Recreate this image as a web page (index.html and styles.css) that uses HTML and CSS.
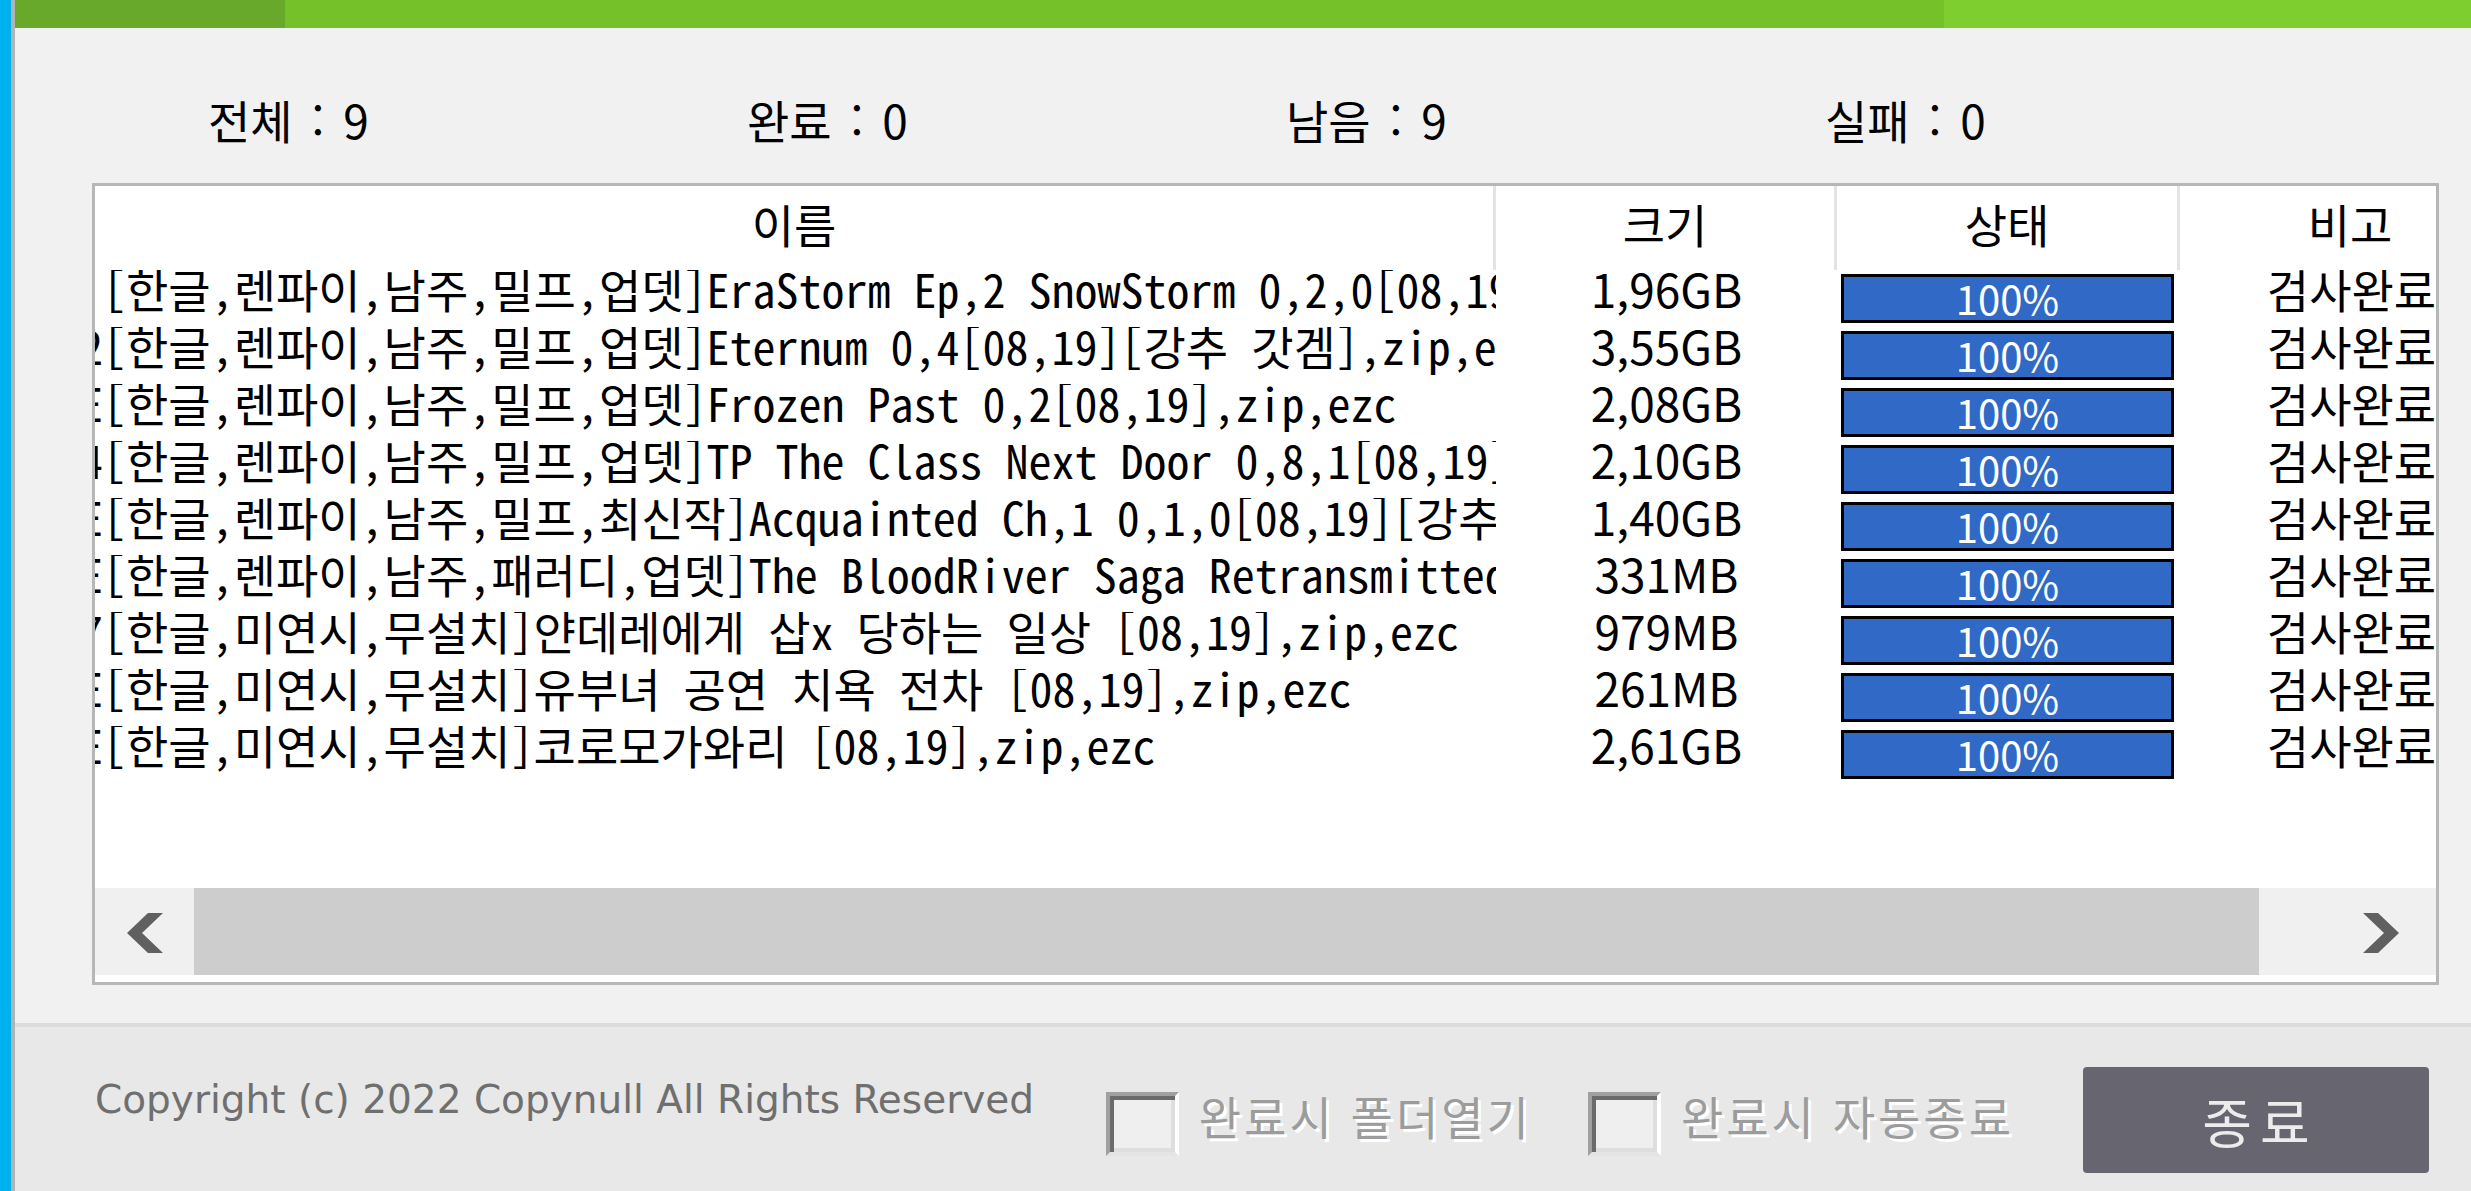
FILE: index.html
```html
<!DOCTYPE html>
<html lang="ko">
<head>
<meta charset="utf-8">
<title>검사</title>
<link rel="stylesheet" href="styles.css">
</head>
<body>
<div class="window">
  <div class="main">
    <div class="topbar">
      <div class="seg seg-a"></div>
      <div class="seg seg-b"></div>
      <div class="seg seg-c"></div>
    </div>

    <div class="stats">
      <div class="stat">전체 : 9</div>
      <div class="stat">완료 : 0</div>
      <div class="stat">남음 : 9</div>
      <div class="stat">실패 : 0</div>
    </div>

    <div class="list">
      <div class="cols head">
        <div class="hc">이름</div>
        <div class="hc">크기</div>
        <div class="hc">상태</div>
        <div class="hc">비고</div>
      </div>
      <div class="rows">
        <div class="cols row">
          <div class="name"><span class="name-in">&nbsp;[한글,렌파이,남주,밀프,업뎃]EraStorm Ep,2 SnowStorm 0,2,0[08,19],zip,ezc</span></div>
          <div class="size">1,96GB</div>
          <div class="status"><div class="bar">100%</div></div>
          <div class="note">검사완료</div>
        </div>
        <div class="cols row">
          <div class="name"><span class="name-in">2[한글,렌파이,남주,밀프,업뎃]Eternum 0,4[08,19][강추 갓겜],zip,ezc</span></div>
          <div class="size">3,55GB</div>
          <div class="status"><div class="bar">100%</div></div>
          <div class="note">검사완료</div>
        </div>
        <div class="cols row">
          <div class="name"><span class="name-in">E[한글,렌파이,남주,밀프,업뎃]Frozen Past 0,2[08,19],zip,ezc</span></div>
          <div class="size">2,08GB</div>
          <div class="status"><div class="bar">100%</div></div>
          <div class="note">검사완료</div>
        </div>
        <div class="cols row">
          <div class="name"><span class="name-in">4[한글,렌파이,남주,밀프,업뎃]TP The Class Next Door 0,8,1[08,19],zip,ezc</span></div>
          <div class="size">2,10GB</div>
          <div class="status"><div class="bar">100%</div></div>
          <div class="note">검사완료</div>
        </div>
        <div class="cols row">
          <div class="name"><span class="name-in">E[한글,렌파이,남주,밀프,최신작]Acquainted Ch,1 0,1,0[08,19][강추 갓겜],zip,ezc</span></div>
          <div class="size">1,40GB</div>
          <div class="status"><div class="bar">100%</div></div>
          <div class="note">검사완료</div>
        </div>
        <div class="cols row">
          <div class="name"><span class="name-in">E[한글,렌파이,남주,패러디,업뎃]The BloodRiver Saga Retransmitted[08,19],zip,ezc</span></div>
          <div class="size">331MB</div>
          <div class="status"><div class="bar">100%</div></div>
          <div class="note">검사완료</div>
        </div>
        <div class="cols row">
          <div class="name"><span class="name-in">7[한글,미연시,무설치]얀데레에게 삽x 당하는 일상 [08,19],zip,ezc</span></div>
          <div class="size">979MB</div>
          <div class="status"><div class="bar">100%</div></div>
          <div class="note">검사완료</div>
        </div>
        <div class="cols row">
          <div class="name"><span class="name-in">E[한글,미연시,무설치]유부녀 공연 치욕 전차 [08,19],zip,ezc</span></div>
          <div class="size">261MB</div>
          <div class="status"><div class="bar">100%</div></div>
          <div class="note">검사완료</div>
        </div>
        <div class="cols row">
          <div class="name"><span class="name-in">E[한글,미연시,무설치]코로모가와리 [08,19],zip,ezc</span></div>
          <div class="size">2,61GB</div>
          <div class="status"><div class="bar">100%</div></div>
          <div class="note">검사완료</div>
        </div>
      </div>
      <div class="scroll">
        <div class="sbtn">
          <svg class="arrow" viewBox="0 0 36 40" width="36" height="40"><polygon points="36,0 21,0 0,20 21,40 36,40 15,20"/></svg>
        </div>
        <div class="thumb"></div>
        <div class="track"></div>
        <div class="sbtn sbtn-r">
          <svg class="arrow" viewBox="0 0 36 40" width="36" height="40"><polygon points="0,0 15,0 36,20 15,40 0,40 21,20"/></svg>
        </div>
      </div>
    </div>

    <div class="footer">
      <div class="copy">Copyright (c) 2022 Copynull All Rights Reserved</div>
      <div class="opt">
        <div class="cb"></div>
        <div class="opt-label">완료시 폴더열기</div>
      </div>
      <div class="opt">
        <div class="cb"></div>
        <div class="opt-label">완료시 자동종료</div>
      </div>
      <div class="btn">종료</div>
    </div>
  </div>
</div>
</body>
</html>
```

FILE: styles.css
```css
* {
  box-sizing: border-box;
}

html,
body {
  margin: 0;
  padding: 0;
}

body {
  font-family: "Noto Sans CJK KR", "Noto Sans", sans-serif;
  background: #f1f1f1;
  color: #000;
  overflow: hidden;
}

.window {
  display: flex;
  height: 1191px;
  border-left: 11px solid #00b1f2;
}

.main {
  flex: 1;
  min-width: 0;
  display: flex;
  flex-direction: column;
  border-left: 4px solid #b3b3b3;
}

/* top progress strip */
.topbar {
  display: flex;
  height: 28px;
  flex-shrink: 0;
}

.seg-a {
  width: 270px;
  background: #68a82a;
}

.seg-b {
  width: 1659px;
  background: #74c12a;
}

.seg-c {
  flex: 1;
  background: #7fce2f;
}

/* counters */
.stats {
  display: flex;
  margin-top: 73px;
  padding-left: 193px;
  font-size: 46px;
  line-height: 36px;
  word-spacing: 6px;
  flex-shrink: 0;
}

.stat {
  width: 539px;
  white-space: nowrap;
}

/* list view */
.list {
  margin: 46px 32px 0 77px;
  height: 802px;
  flex-shrink: 0;
  border: 3px solid #b7b7b7;
  background: #fff;
  display: flex;
  flex-direction: column;
  overflow: hidden;
}

.cols {
  display: grid;
  grid-template-columns: 1401px 341px 343px 343px;
}

.head {
  height: 84px;
  flex-shrink: 0;
}

.hc {
  border-right: 3px solid #e4e4e4;
  text-align: center;
  font-size: 46px;
  line-height: 36px;
  padding-top: 19px;
}

.rows {
  flex: 1;
  overflow: hidden;
}

.row {
  height: 57px;
  font-size: 46px;
  line-height: 36px;
  white-space: nowrap;
}

.name {
  overflow: hidden;
  padding-right: 3px;
  font-family: "Noto Sans Mono CJK KR", "DejaVu Sans Mono", "Noto Sans CJK KR", monospace;
  font-size: 46px;
}

.name-in {
  display: block;
  margin-left: -15px;
}

.size,
.note {
  text-align: center;
}

.status {
  padding: 4px 6px 0 4px;
}

.bar {
  height: 49px;
  border: 3px solid #000;
  background: #3169c6;
  color: #fff;
  font-size: 40px;
  line-height: 43px;
  text-align: center;
}

/* horizontal scrollbar */
.scroll {
  height: 87px;
  flex-shrink: 0;
  display: flex;
  background: #f0f0f0;
  margin-bottom: 7px;
}

.sbtn {
  width: 99px;
  flex-shrink: 0;
  display: flex;
  align-items: center;
  justify-content: center;
}

.sbtn-r {
  padding-right: 12px;
}

.arrow {
  fill: #606060;
  margin-top: 3px;
}

.thumb {
  width: 2065px;
  flex-shrink: 0;
  background: #cdcdcd;
}

.track {
  flex: 1;
}

/* footer */
.footer {
  flex: 1;
  margin-top: 38px;
  border-top: 4px solid #dcdcdc;
  background: #e8e8e8;
  display: flex;
  align-items: flex-start;
  padding: 40px 42px 0 80px;
}

.copy {
  flex: 1;
  font-family: "DejaVu Sans", "Liberation Sans", sans-serif;
  font-size: 39px;
  line-height: 44px;
  color: #6f6f6f;
  margin-top: 11px;
  white-space: nowrap;
}

.opt {
  display: flex;
  align-items: flex-start;
  gap: 20px;
}

.opt + .opt {
  margin-left: 56px;
}

.cb {
  width: 73px;
  height: 64px;
  margin-top: 25px;
  background: #efefef;
  border-top: 4px solid #a0a0a0;
  border-left: 4px solid #a0a0a0;
  border-right: 4px solid #fff;
  border-bottom: 4px solid #e4e4e4;
  box-shadow: inset 4px 4px 0 #6b6b6b, inset -4px -4px 0 #dedede;
}

.opt-label {
  margin-top: 30px;
  font-size: 46px;
  line-height: 36px;
  letter-spacing: 3px;
  color: #9c9c9c;
  text-shadow: 3px 3px 0 #fff;
  white-space: nowrap;
}

.btn {
  margin-left: 69px;
  width: 346px;
  height: 106px;
  flex-shrink: 0;
  background: #666570;
  border-radius: 4px;
  color: #ececec;
  font-size: 54px;
  letter-spacing: 8px;
  padding-left: 8px;
  display: flex;
  align-items: center;
  justify-content: center;
}
```
